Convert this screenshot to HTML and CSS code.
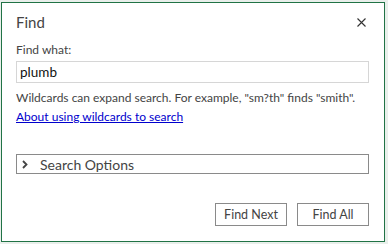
FILE: index.html
```html
<!DOCTYPE html>
<html lang="en">
<head>
    <meta charset="UTF-8">
    <title>Find</title>
    <link rel="stylesheet" href="styles.css">
</head>
<body>
    <div class="dialog">
        <div class="dialog-header">
            <h1 class="title">Find</h1>
            <button class="close-btn" aria-label="Close">
                <svg width="9" height="9" viewBox="0 0 9 9">
                    <path d="M0.5 0.5 L8.5 8.5 M8.5 0.5 L0.5 8.5" stroke="#333" stroke-width="1.1" fill="none"/>
                </svg>
            </button>
        </div>

        <label class="field-label" for="findWhat">Find what:</label>
        <input class="find-input" type="text" id="findWhat" value="plumb">

        <p class="hint">Wildcards can expand search. For example, "sm?th" finds "smith".</p>
        <a class="help-link" href="#">About using wildcards to search</a>

        <div class="options-toggle">
            <svg class="chevron" width="6" height="9" viewBox="0 0 6 9">
                <path d="M1 1 L4.5 4.5 L1 8" stroke="#444" stroke-width="1.8" fill="none"/>
            </svg>
            <span>Search Options</span>
        </div>

        <div class="actions">
            <button class="btn">Find Next</button>
            <button class="btn">Find All</button>
        </div>
    </div>
</body>
</html>
```

FILE: styles.css
```css
* {
    margin: 0;
    padding: 0;
    box-sizing: border-box;
}

body {
    font-family: Lato, "Noto Sans", sans-serif;
    background: #e9efeb;
    width: 388px;
    height: 244px;
    overflow: hidden;
    padding: 2px 3px 2px 1px;
}

.dialog {
    background: white;
    border: 1px solid #217346;
    height: 240px;
    padding: 0 15px 0 14px;
    display: flex;
    flex-direction: column;
    color: #444;
}

.dialog-header {
    display: flex;
    justify-content: space-between;
    align-items: center;
    height: 36px;
    padding-top: 2px;
}

.title {
    font-size: 15px;
    font-weight: 400;
    color: #444;
}

.close-btn {
    background: none;
    border: none;
    width: 9px;
    height: 9px;
    margin-right: 3px;
    display: flex;
}

.field-label {
    font-size: 12px;
    line-height: 18px;
    margin-top: 2px;
}

.find-input {
    margin-top: 2px;
    height: 22px;
    width: 100%;
    border: 1px solid #d6d6d6;
    font-family: inherit;
    font-size: 13.5px;
    color: #111;
    padding: 0 3px;
    outline: none;
}

.hint {
    font-size: 12px;
    margin-top: 6px;
    line-height: 18px;
    white-space: nowrap;
}

.help-link {
    font-size: 12px;
    line-height: 18px;
    margin-top: 1px;
    color: #0000cd;
    align-self: flex-start;
}

.options-toggle {
    margin-top: 28px;
    height: 20px;
    border: 1px solid #8a8a8a;
    display: flex;
    align-items: center;
    padding-left: 5px;
    font-size: 14px;
}

.chevron {
    margin-right: 12px;
}

.actions {
    margin-top: 29px;
    display: flex;
    justify-content: flex-end;
    gap: 10px;
}

.btn {
    width: 72px;
    height: 23px;
    background: white;
    border: 1px solid #8a8a8a;
    font-family: inherit;
    font-size: 12.5px;
    color: #444;
}
```
